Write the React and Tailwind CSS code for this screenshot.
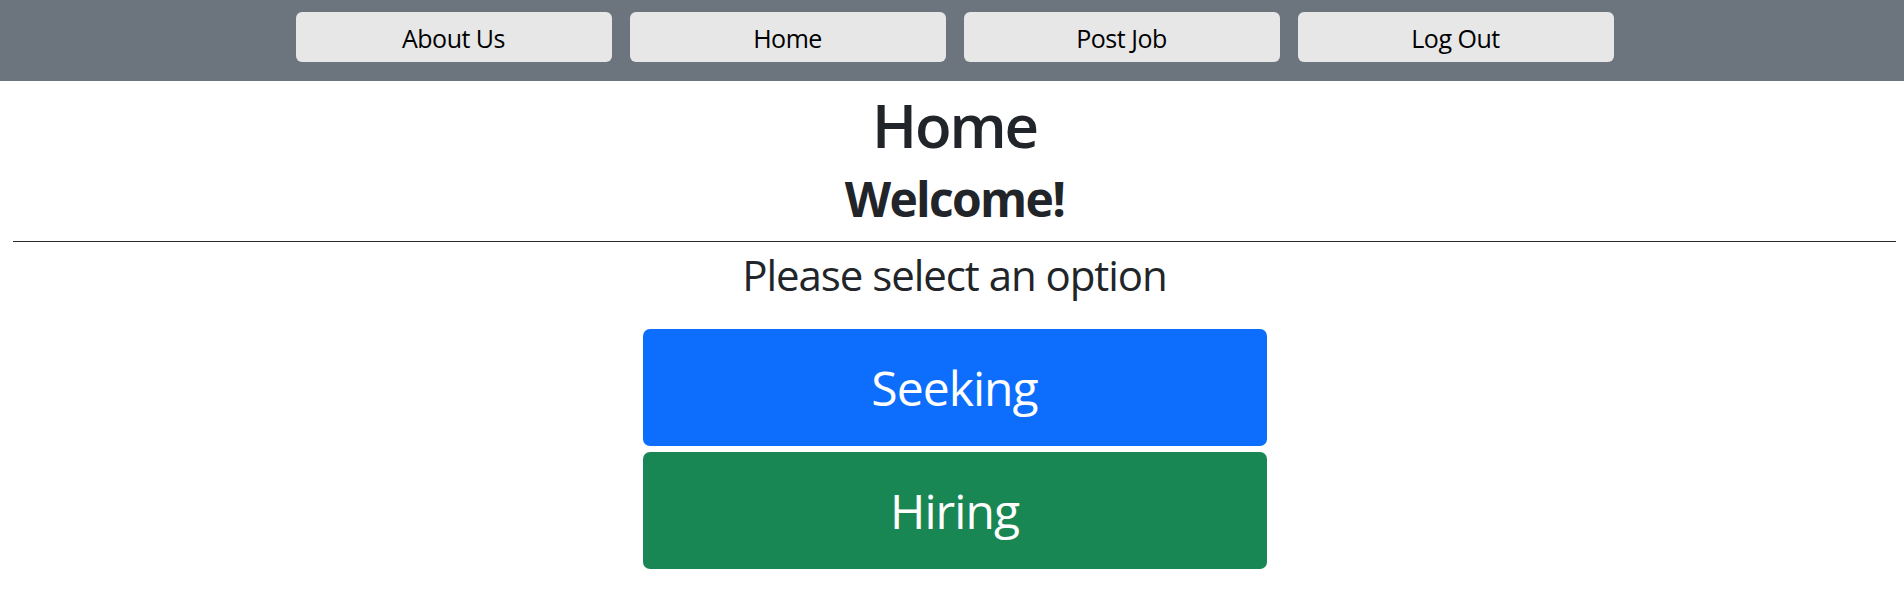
const navItems = ["About Us", "Home", "Post Job", "Log Out"];

const App = () => {
  return (
    <div className="min-h-[600px] bg-white text-[#212529]" style={{ fontFamily: '"Open Sans", "Noto Sans", sans-serif' }}>
      <nav className="h-[81px] bg-[#6c757d] pl-[5px] pt-[12px]">
        <div className="flex justify-center gap-[18px]">
          {navItems.map((item) => (
            <button
              key={item}
              className="w-[316px] h-[50px] rounded-md bg-[#e7e7e7] text-black text-[25px] leading-[30px] tracking-[-0.02em] pt-[2px]"
            >
              {item}
            </button>
          ))}
        </div>
      </nav>

      <div className="pl-[5px] text-center">
        <h1 className="mt-[8px] text-[60px] leading-[72px] font-semibold tracking-[-0.035em]">Home</h1>
        <h2 className="mt-[9px] text-[48px] leading-[58px] font-bold tracking-[-0.035em]">Welcome!</h2>
        <hr className="mx-2 mt-[13px] border-t border-[#2b2b2b]" />
        <p className="mt-[8px] text-[42px] leading-[50px] tracking-[-0.025em]">Please select an option</p>

        <div className="mt-[29px] flex flex-col items-center gap-[6px]">
          <button className="w-[624px] h-[117px] rounded-[7px] bg-[#0d6efd] text-white text-[48px] leading-[58px] tracking-[-0.02em]">
            Seeking
          </button>
          <button className="w-[624px] h-[117px] rounded-[7px] bg-[#198754] text-white text-[48px] leading-[58px] tracking-[-0.02em]">
            Hiring
          </button>
        </div>
      </div>
    </div>
  );
};

export default App;
